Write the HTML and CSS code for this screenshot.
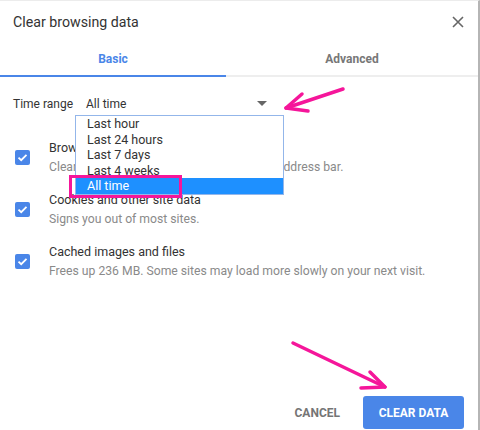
FILE: index.html
```html
<!DOCTYPE html>
<html>
<head>
<meta charset="utf-8">
<link rel="stylesheet" href="styles.css">
</head>
<body>
<div class="dialog">
  <div class="header">
    <span class="title">Clear browsing data</span>
    <svg class="close" width="12" height="12" viewBox="0 0 12 12"><path d="M1 1L11 11M11 1L1 11" stroke="#666" stroke-width="1.6" fill="none"/></svg>
  </div>
  <div class="tabs">
    <div class="tab active">Basic</div>
    <div class="tab">Advanced</div>
  </div>
  <div class="content">
    <div class="range-row">
      <span class="range-label">Time range</span>
      <div class="select">
        <span class="select-value">All time</span>
        <span class="caret"></span>
        <ul class="options">
          <li>Last hour</li>
          <li>Last 24 hours</li>
          <li>Last 7 days</li>
          <li>Last 4 weeks</li>
          <li class="selected">All time</li>
        </ul>
        <div class="highlight-box"></div>
      </div>
    </div>
    <div class="items">
      <div class="item">
        <span class="check"><svg width="15" height="15" viewBox="0 0 15 15"><path d="M3.5 7.6L6.2 10.2L11.5 4.8" stroke="#fff" stroke-width="1.8" fill="none"/></svg></span>
        <div class="item-text">
          <div class="item-title">Browsing history</div>
          <div class="item-desc">Clears history and autocompletions in the address bar.</div>
        </div>
      </div>
      <div class="item">
        <span class="check"><svg width="15" height="15" viewBox="0 0 15 15"><path d="M3.5 7.6L6.2 10.2L11.5 4.8" stroke="#fff" stroke-width="1.8" fill="none"/></svg></span>
        <div class="item-text">
          <div class="item-title">Cookies and other site data</div>
          <div class="item-desc">Signs you out of most sites.</div>
        </div>
      </div>
      <div class="item">
        <span class="check"><svg width="15" height="15" viewBox="0 0 15 15"><path d="M3.5 7.6L6.2 10.2L11.5 4.8" stroke="#fff" stroke-width="1.8" fill="none"/></svg></span>
        <div class="item-text">
          <div class="item-title">Cached images and files</div>
          <div class="item-desc">Frees up 236 MB. Some sites may load more slowly on your next visit.</div>
        </div>
      </div>
    </div>
  </div>
  <div class="footer">
    <button class="btn-cancel">CANCEL</button>
    <button class="btn-clear">CLEAR DATA</button>
  </div>
  <svg class="arrows" width="480" height="430" viewBox="0 0 480 430">
    <g stroke="#f5169a" stroke-width="3.5" stroke-linecap="round" stroke-linejoin="round" fill="none">
      <path d="M343 88L286 107"/>
      <path d="M302 93L286 107L308 110"/>
      <path d="M293 342L385 386"/>
      <path d="M370 371L385 386L361 387"/>
    </g>
  </svg>
</div>
</body>
</html>
```
FILE: styles.css
```css
* { box-sizing: border-box; }
html, body { margin: 0; padding: 0; }
body {
  width: 480px;
  height: 430px;
  overflow: hidden;
  background: #fff;
  font-family: Roboto, "Liberation Sans", sans-serif;
}
.dialog {
  position: relative;
  width: 480px;
  height: 430px;
  border-right: 2px solid #b5b5b5;
  border-top: 1px solid #ececec;
  display: flex;
  flex-direction: column;
  overflow: hidden;
}
.header {
  height: 40px;
  display: flex;
  align-items: center;
  justify-content: space-between;
  padding: 1px 14px 0 13px;
}
.title {
  font-size: 14.2px;
  color: #333;
}
.close { display: block; }
.tabs {
  display: flex;
  height: 36px;
}
.tab {
  flex: 1;
  display: flex;
  align-items: center;
  justify-content: center;
  font-size: 12px;
  font-weight: bold;
  color: #777;
  border-bottom: 2px solid #eeeeee;
  padding-top: 1px;
}
.tab.active {
  flex: 0 0 226px;
  color: #4a86e8;
  border-bottom-color: #4a86e8;
}
.content {
  padding: 0 13px;
}
.range-row {
  display: flex;
  align-items: center;
  height: 24px;
  margin-top: 15px;
  font-size: 12px;
  color: #333;
}
.range-label {
  width: 73px;
}
.select {
  position: relative;
  width: 187px;
  height: 24px;
  display: flex;
  align-items: center;
  border-bottom: 1px solid #8fb4ee;
}
.select-value { flex: 1; }
.caret {
  width: 0;
  height: 0;
  border-left: 5px solid transparent;
  border-right: 5px solid transparent;
  border-top: 5px solid #666;
  margin-right: 6px;
}
.options {
  position: absolute;
  left: -11px;
  top: 23px;
  width: 209px;
  margin: 0;
  padding: 0;
  list-style: none;
  border: 1px solid #93b6ea;
  background: #fff;
  z-index: 2;
}
.options li {
  height: 15.6px;
  line-height: 16.6px;
  padding-left: 11px;
  font-size: 12.5px;
  color: #333;
}
.options li.selected {
  background: #1e90ff;
  color: #fff;
}
.highlight-box {
  position: absolute;
  left: -17px;
  top: 83px;
  width: 113px;
  height: 23px;
  border: 3px solid #f5169a;
  z-index: 3;
}
.items {
  margin-top: 23px;
  display: flex;
  flex-direction: column;
  gap: 15px;
}
.item {
  display: flex;
  align-items: flex-start;
  height: 37px;
}
.check {
  width: 15px;
  height: 15px;
  margin: 11px 19px 0 2px;
  background: #4a86e8;
  border-radius: 2px;
  flex: none;
}
.check svg { display: block; }
.item-title {
  font-size: 12.5px;
  line-height: 18px;
  color: #333;
}
.item-desc {
  margin-top: 1px;
  font-size: 12.2px;
  line-height: 18px;
  color: #8a8a8a;
}
.footer {
  margin-top: auto;
  display: flex;
  justify-content: flex-end;
  align-items: center;
  gap: 11px;
  padding: 0 14px 1px 0;
}
.btn-cancel {
  border: none;
  background: none;
  font-family: inherit;
  font-size: 12px;
  font-weight: bold;
  color: #757575;
  padding: 0 12px;
  height: 33px;
}
.btn-clear {
  border: none;
  background: #4a86e8;
  border-radius: 3px;
  font-family: inherit;
  font-size: 12px;
  font-weight: bold;
  color: #fff;
  width: 101px;
  height: 33px;
  padding: 0;
}
.arrows {
  position: absolute;
  left: 0;
  top: 0;
  pointer-events: none;
  z-index: 5;
}
```
